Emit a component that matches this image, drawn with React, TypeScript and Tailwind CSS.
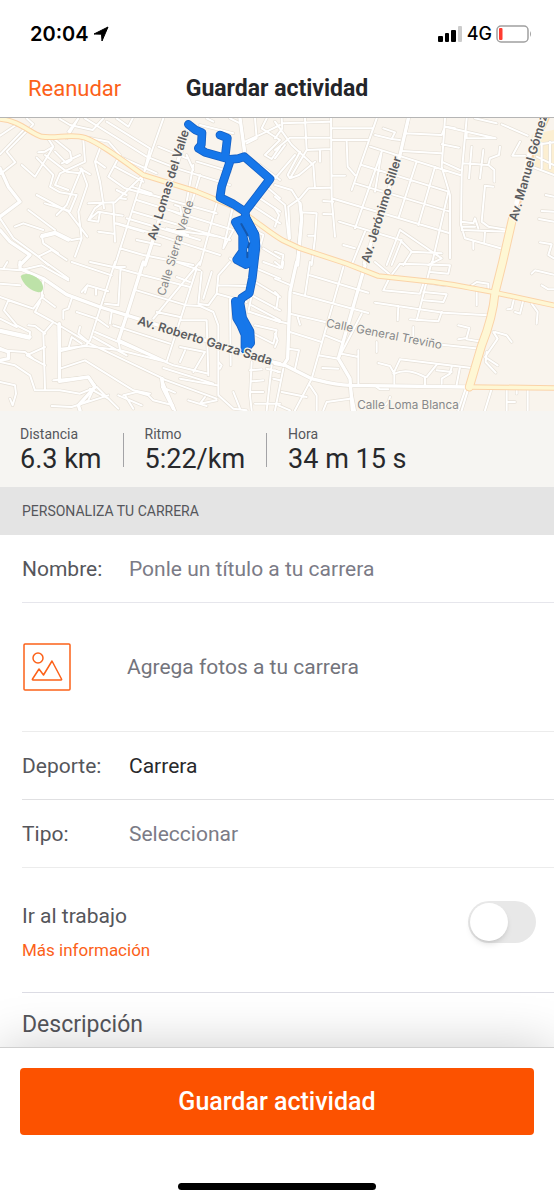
import { useState, type ReactNode } from 'react';

type Tile = { transform: string; minor: string; main: string };

// Streets are grouped by quadrant, each with its own origin
const tiles: Tile[] = [
  {
    transform: 'translate(0 -9)',
    minor: `M20 10L48 30L0 62M75 40L0 118M100 28L20 110L46 142L0 178M100 28L80 10M120 60L145 72L160 95L135 110L115 112M160 70L210 110L215 135L200 145L165 110M160 95L105 185L65 150M110 128L160 180L150 215L180 232L228 240M135 120L200 170L240 175M200 70L235 10M235 10L205 50M180 12L210 30L278 45L310 10M185 145L240 120M250 75L255 140L180 175L165 210L205 225M240 160L270 178M245 165L262 210L235 290L245 370L225 425M245 160L200 270L170 300M110 240L205 290L262 365M85 285L165 345M135 265L210 288L230 240M300 100L285 140L300 200L312 280M290 140L315 158M265 265L340 262L345 380M265 315L295 290L368 302M265 315L285 280L310 262M300 290L295 320L265 315M295 350L340 356M345 262L430 180L490 10M325 185L360 120L325 80L265 68M325 185L375 220L450 240M345 155L430 200M370 130L470 175M350 10L385 35L398 10M320 20L450 100L430 180M255 10L440 125L530 160L690 210M475 95L560 130M430 180L345 450M395 215L455 235M380 240L350 225M360 250L378 252M350 325L440 350L660 420M345 325L430 350M360 400L430 420L580 450M420 230L650 295M410 255L700 345M380 310L600 375M400 290L690 375M520 290L545 300L540 275L525 270M600 180L520 450M580 150L560 260M650 265L600 450M700 270L670 400M500 340L565 360M410 375L480 390M520 345L660 365M720 10L735 110M620 10L640 20M690 10L720 25M600 30L700 55M590 140L690 170M560 120L580 165M735 80L800 50L840 30M740 85L770 70L765 10M800 10L785 40L840 75M840 75L795 120L815 132L840 95M780 150L840 195M805 220L840 250M780 250L840 290M755 270L840 325M770 350L790 360L765 450M790 400L840 430M700 345L670 400M690 430L720 450M0 310L40 370L115 425L145 450M45 335L70 325L130 345M115 425L155 405L200 435M125 360L165 350L215 375L245 370M125 360L130 385L175 415`,
    main: `M0 160L25 215L60 260L0 305M0 345L30 380L90 420L60 450M565 40L435 450M720 10L735 120M125 365L165 355L205 375`,
  },
  {
    transform: 'translate(825 -9)',
    minor: `M0 20L50 90L115 150L120 220M0 70L22 40L20 10M0 105L45 68H168M168 10L170 250L180 365M90 10L95 105L168 102M20 25L165 20M170 40L292 40M170 75L280 75M95 105L45 190L72 180L120 140M45 190L38 180L75 110M30 90L0 130M60 120L0 190M135 105V140M215 80L218 155L240 180M170 182H210M305 10L230 225M300 60L350 72L360 52L325 40M350 72L375 75M390 55L500 60L510 35M400 15L390 60M380 108L498 115M510 10L500 155M510 35L575 50L662 70M540 40L515 35M575 10L560 175L558 330L570 370L685 402M575 50V70H662M600 10L665 25M500 88L552 98M500 140L555 165M285 95L555 180M260 150L520 230M240 205L525 290M170 250L525 355M300 230L320 110M320 110L240 340M425 140L370 310M480 155L430 330M520 230L470 450M500 155L525 240V430M192 320L375 375L410 410L500 415M375 345L500 430M375 345L335 450M270 350L230 450M205 390L240 400M145 258L175 260M145 297L170 298M0 210L50 225L75 265L80 300L65 450M40 275L75 250L100 220L165 218M40 275L45 370M80 292L125 295L120 370L110 450M100 362H120M0 245L30 270L42 380M0 280L12 300L0 335M0 410L25 420L20 450M590 95L582 190M625 105L615 190M565 145L640 150L658 165V200M640 150L645 130L672 120L675 95M655 215L630 212L620 320L640 335L700 345M560 345L700 350M560 320L595 325L600 310L610 340M560 335L600 335M630 350L628 380M595 378V402M680 28L758 62M735 80L712 122H750M837 245L812 240M837 290L800 288M792 312L837 320M795 382L830 388L820 420L837 430M780 90L837 82M785 125L837 150M770 155L837 180M800 85V160M825 80V160M380 375L350 450M410 410L385 450M500 430L460 450`,
    main: `M400 10L375 120L268 445M75 265L80 310L68 450M810 10L775 90L715 310`,
  },
  {
    transform: 'translate(0 432)',
    minor: `M0 20L60 25L125 10L205 55M10 20L22 0M0 65L60 70M130 55L125 105L165 135M130 100L100 140L0 105M120 120L105 150L160 180L270 245L490 350M100 140L25 115L12 145L50 190L90 210L88 230L0 210M0 170L50 195M130 55L125 90M135 0L205 50M345 0L270 235L258 250L180 268M215 0L335 40M270 0L340 15L430 40L570 75M245 90L262 70L325 88M262 70L255 92M288 80V98M215 110L205 140L190 145V170M230 150L290 170L325 195M240 195L235 215L265 240M362 15L355 130L315 125M340 15L375 15M410 85L560 130L600 132L640 150L655 190V400L700 440L740 445M600 0L460 170M590 20L500 300L360 235M530 45L570 60M530 0L600 25M605 30L595 125L625 130L650 95L740 120M635 30L610 110M650 95L655 40L690 0M655 70L740 72M470 150L540 165M545 175L620 175L625 340M335 150L330 185M340 190L510 245M285 210L520 310L625 335M280 225L380 280M355 230L360 265L500 300M540 255L615 270L580 330M555 265L540 300M490 318L640 365M485 350L650 410M540 350L650 370M690 110L692 310M655 300L665 310L660 320M160 180L130 215L135 380M85 190L105 192L135 215M135 255L80 280L135 310M180 320L255 295L400 385L450 395M175 190L178 355M180 260L260 252L360 265M205 260L215 225L245 245M0 265L75 270L100 290M0 300L45 310L90 340L105 385L180 385L240 395L290 375L355 440M270 380L325 410M160 355L265 345L285 370L265 415L235 430M155 432L215 435L325 400M0 360L45 370L48 395L38 430L30 410M355 400L425 430M370 400L410 390L445 400L460 415L520 430M375 400L400 440M485 350L495 375L525 445M485 375L525 392M565 415L620 432M615 405L600 425L650 415M700 390L720 440M755 300L750 400L755 445M750 325L785 322M755 358L790 355M750 390L790 390M765 425H840M815 310L800 445M760 215L820 245L830 205L765 190M750 150L840 180M765 60L840 105M770 20L840 50M790 0L840 18M755 100L840 145M755 100L745 150M755 130L840 175M800 320L840 330M820 350L840 355`,
    main: `M60 0V20L130 50L200 98L300 135L420 172L820 300L840 305M430 0L380 160L355 235M178 185V358L265 345L285 375L235 430L240 445M0 260L25 270V290L0 295M485 350L490 380L520 440M0 205L90 225`,
  },
  {
    transform: 'translate(825 432)',
    minor: `M0 0L22 18L25 0M0 50L48 70M105 0L90 100M205 15L110 350L60 445M55 92L280 153M105 40L280 92M45 155L150 180M45 210L140 240M68 165L75 188M0 90L10 100L5 135L0 140M0 175L40 185M0 215L8 235L0 255M40 260L72 265L60 320M0 325L10 330M25 320L0 445M20 390L95 405M10 430L45 445M105 370L125 400V445M145 445L155 420L225 410M150 220L200 240M260 155L190 290M200 275L250 285M250 265V365M190 290L130 280M142 318L190 320M300 0L350 42M375 5L345 45L325 85L435 95L445 65M375 5L525 10L520 35L465 30M470 0L425 175M450 60L510 70M445 90L515 97L505 120L445 115M300 122L505 152L640 160M370 132L368 175M405 172L490 178L500 150M415 195V225M305 240V270M310 303L345 312L358 335V365M358 335C390 320 420 330 450 345V368M375 292L590 318M375 292L355 335M485 308L455 345M530 315L525 335L500 350V365M555 315L545 368M485 325L530 330M500 248L615 260M550 190L583 198L575 228L550 232M575 232L625 240M605 90V130M583 75L605 60L640 65V78M660 210L695 220L710 240M655 210L668 230L630 285L668 310M635 270L632 300L662 332M717 110L710 140L697 142M745 115L735 155L720 150M770 125L788 150L785 185M770 35L780 25L837 38M800 70L820 82H837M572 380L550 445M580 380L560 445M650 380L630 445M695 380V445M758 380V445M695 420H720M305 375L315 382H340M345 405L340 420L330 430M225 370L240 445M725 380V395`,
    main: `M65 0L45 90L38 290L25 310M0 305L30 310L110 350C150 360 180 370 225 370L583 375M270 10L190 290L225 350L232 445`,
  },
];

const highways = [
  'M0 3C60 8 90 46 125 56C170 63 210 46 255 59C300 76 360 121 430 171L585 219L700 266C760 301 810 346 850 368L900 391L1040 437L1135 474L1285 490C1355 497 1425 512 1485 524L1662 562',
  'M1408 807L1662 810',
];
const avenue = 'M1538 300L1508 432L1485 524C1480 582 1465 632 1445 682L1408 807';

function MapLabel({ x, y, angle, major, children }: { x: number; y: number; angle: number; major?: boolean; children: ReactNode }) {
  return (
    <text
      transform={`translate(${x} ${y}) rotate(${angle})`}
      textAnchor="middle"
      dominantBaseline="central"
      fontSize={major ? 37 : 35}
      fontWeight={major ? 600 : 400}
      fill={major ? '#5b5c5f' : '#87888a'}
      stroke="#faf6ee"
      strokeWidth={major ? 7 : 6}
      paintOrder="stroke"
    >
      {children}
    </text>
  );
}

function RouteMap() {
  return (
    <svg viewBox="0 0 1662 879" className="block w-full bg-[#f9f4ed] font-['Inter',sans-serif]" role="img" aria-label="Mapa de la ruta">
      <path d="M1595 50L1662 35V175L1590 145Z" fill="#fcefd2" />
      <g fill="none" strokeLinecap="round" strokeLinejoin="round">
        {tiles.map((t) => (
          <g key={t.transform} transform={t.transform} stroke="#e6e0d7">
            <path d={t.minor} strokeWidth="10" />
            <path d={t.main} strokeWidth="14" />
          </g>
        ))}
        {tiles.map((t) => (
          <g key={t.transform} transform={t.transform} stroke="#fff">
            <path d={t.minor} strokeWidth="6" />
            <path d={t.main} strokeWidth="10" />
          </g>
        ))}
        <g stroke="#fbd3a8">
          <path d="M1640 0L1602 80L1542 300" strokeWidth="18" />
          {highways.map((d) => <path key={d} d={d} strokeWidth="17" />)}
          <path d={avenue} strokeWidth="27" />
        </g>
        <path d="M1635 0L1597 80L1538 300" stroke="#fff" strokeWidth="14" />
        <g stroke="#fef7d4">
          {highways.map((d) => <path key={d} d={d} strokeWidth="11" />)}
          <path d={avenue} strokeWidth="21" />
        </g>
      </g>
      <path d="M62 475C70 463 100 467 118 485C135 500 132 525 115 523C95 520 68 500 62 475Z" fill="#bde2a8" />

      <g fill="none" strokeLinecap="round" strokeLinejoin="round">
        {['#1560c4', '#1677ea'].map((color, i) => (
          <g key={color} stroke={color} strokeWidth={i ? 21 : 26}>
            <path d="M565 19L585 35L606 44L604 80L595 91L615 103L690 124L715 122L733 116L810 183L735 281L700 258L660 238L665 205L690 130M660 51L682 60L675 120" />
            <path d="M735 281L738 300L765 350L768 385L757 480L748 525L725 540L720 555L728 600L750 640L752 675L735 695" />
            <path d="M738 300L706 312L728 350V400L710 425L738 440L760 430L767 385L764 350ZM706 550L710 600L722 620L735 650V690" fill={color} />
          </g>
        ))}
        <path d="M724 318L742 350L748 375L742 395V418" stroke="#1558ae" strokeWidth="6" />
        <path d="M744 356L748 372M743 392V400" stroke="#d5e4f5" strokeWidth="3" />
      </g>

      <MapLabel x={504} y={200} angle={-73} major>Av. Lomas del Valle</MapLabel>
      <MapLabel x={526} y={390} angle={-73}>Calle Sierra Verde</MapLabel>
      <MapLabel x={1143} y={275} angle={-73} major>Av. Jerónimo Siller</MapLabel>
      <MapLabel x={1584} y={148} angle={-74} major>Av. Manuel Gómez</MapLabel>
      <MapLabel x={615} y={667} angle={17} major>Av. Roberto Garza Sada</MapLabel>
      <MapLabel x={1152} y={648} angle={11}>Calle General Treviño</MapLabel>
      <MapLabel x={1224} y={860} angle={0}>Calle Loma Blanca</MapLabel>
    </svg>
  );
}

function StatusBar() {
  return (
    <div className="flex h-16 items-center justify-between px-[22px] pt-1 pl-[30px] font-['Inter',sans-serif] text-black">
      <div className="flex items-center gap-1">
        <span className="text-xl font-semibold">20:04</span>
        <svg width="16" height="16" viewBox="0 0 16 16" className="mb-px" aria-hidden="true">
          <path d="M15 1L9 15L8.500 8.200L1 8Z" stroke="#000" strokeLinejoin="round" />
        </svg>
      </div>
      <div className="flex items-center gap-1">
        <svg width="26" height="18" viewBox="0 0 26 18" aria-hidden="true">
          <rect x="1" y="11" width="5" height="6" rx="1" />
          <rect x="8" y="8" width="4" height="9" rx="1" />
          <rect x="14" y="5" width="5" height="12" rx="1" />
          <rect x="21" y="1" width="4" height="16" rx="1" fill="#ccc" />
        </svg>
        <span className="text-lg font-medium">4G</span>
        <svg width="36" height="18" viewBox="0 0 36 18" aria-hidden="true">
          <rect x="1" y="1" width="31" height="16" rx="4" fill="none" stroke="#a0a0a0" strokeWidth="1.5" />
          <rect x="3" y="3" width="3.5" height="12" rx="1" fill="#ff3b30" />
          <path d="M34 6Q36 9 34 12Z" fill="#a0a0a0" />
        </svg>
      </div>
    </div>
  );
}

const stats = [
  { label: 'Distancia', value: '6.3 km' },
  { label: 'Ritmo', value: '5:22/km' },
  { label: 'Hora', value: '34 m 15 s' },
];

export default function App() {
  const [commute, setCommute] = useState(false);

  return (
    <div className="flex min-h-screen flex-col bg-white font-['Roboto',sans-serif] text-[21px] leading-7 text-[#55565b]">
      <StatusBar />
      <header className="grid h-[54px] grid-cols-[1fr_auto_1fr] items-center border-b border-[#b5b5b5] px-7 pb-1">
        <button className="justify-self-start text-[22px] text-[#fc6119]">Reanudar</button>
        <h1 className="text-[23px] font-bold text-[#242529]">Guardar actividad</h1>
      </header>

      <RouteMap />

      <dl className="flex h-[76px] items-start bg-[#f6f5f2] pt-[14px] pl-5">
        {stats.map((s, i) => (
          <div key={s.label} className="flex">
            {i > 0 && <div className="mx-[21px] mt-2 h-[34px] w-px bg-[#a3a3a6]" />}
            <div>
              <dt className="text-sm leading-[18px]">{s.label}</dt>
              <dd className="text-[27px] leading-8 text-[#28292c]">{s.value}</dd>
            </div>
          </div>
        ))}
      </dl>

      <h2 className="flex h-12 items-center bg-[#e4e4e4] px-[22px] text-sm">PERSONALIZA TU CARRERA</h2>

      <form className="ml-[22px] flex grow flex-col" onSubmit={(e) => e.preventDefault()}>
        <div className="flex h-[68px] items-center border-b border-[#e6e6ec]">
          <label htmlFor="name" className="w-[107px]">Nombre:</label>
          <input id="name" type="text" placeholder="Ponle un título a tu carrera" className="min-w-0 grow outline-none placeholder:text-[#7b7b86]" />
        </div>
        <button type="button" className="flex h-[129px] items-center border-b border-[#ececec] text-left text-[#73747c]">
          <span className="w-[105px]">
            <svg width="50" height="48" viewBox="0 0 50 48" fill="none" stroke="#fc6119" strokeWidth="1.5" strokeLinejoin="round" aria-hidden="true">
              <rect x="2" y="1" width="46" height="46" rx="1" />
              <circle cx="16" cy="15" r="5" />
              <path d="M11 37H39Q40 37 39.500 36L30 18L21.500 32L17 26L10.500 36Q10 37 11 37Z" />
            </svg>
          </span>
          Agrega fotos a tu carrera
        </button>
        <div className="flex h-[68px] items-center border-b border-[#e0e0e2]">
          <label htmlFor="sport" className="w-[107px]">Deporte:</label>
          <select id="sport" className="grow appearance-none text-[#28292c] outline-none">
            <option>Carrera</option>
          </select>
        </div>
        <div className="flex h-[68px] items-center border-b border-[#ececec]">
          <label htmlFor="type" className="w-[107px]">Tipo:</label>
          <select id="type" className="grow appearance-none text-[#7b7b86] outline-none">
            <option>Seleccionar</option>
          </select>
        </div>
        <div className="flex h-[125px] items-center justify-between border-b border-[#dcdce4] pr-[18px]">
          <div className="flex flex-col gap-2 pt-1">
            <label htmlFor="commute">Ir al trabajo</label>
            <a href="#info" className="text-[17px] leading-6 text-[#fc6119]">Más información</a>
          </div>
          <input
            id="commute"
            type="checkbox"
            role="switch"
            checked={commute}
            onChange={(e) => setCommute(e.target.checked)}
            className="mb-4 h-[42px] w-[68px] appearance-none rounded-full bg-[#e8e8e8] p-[2px] before:block before:size-[38px] before:rounded-full before:bg-white before:shadow-md checked:bg-[#fc5200] checked:before:ml-[26px]"
          />
        </div>
        <textarea aria-label="Descripción" placeholder="Descripción" rows={1} className="h-[54px] resize-none pt-[18px] text-[23px] outline-none placeholder:text-[#55565b]" />
      </form>

      <footer className="relative border-t border-[#cfcfcf] bg-white px-5 pt-5 pb-[10px] shadow-[0_0_50px_rgba(0,0,0,0.2)]">
        <button className="h-[67px] w-full rounded bg-[#fc5200] text-[25px] font-medium text-white">Guardar actividad</button>
        <div className="mx-auto mt-12 h-[7px] w-[198px] rounded-full bg-black" />
      </footer>
    </div>
  );
}
